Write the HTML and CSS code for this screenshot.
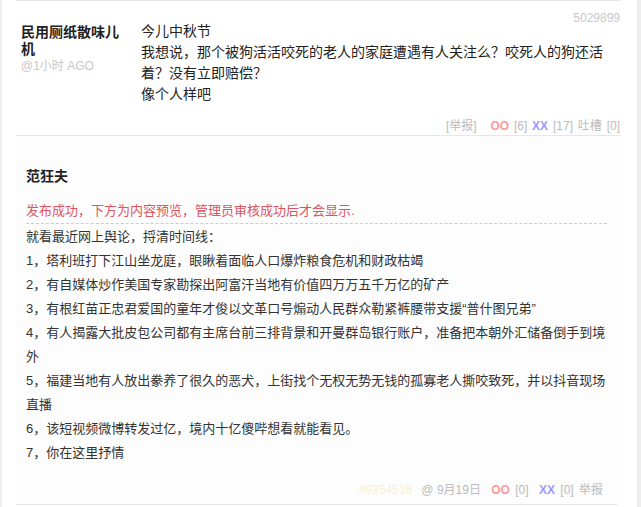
FILE: index.html
```html
<!DOCTYPE html>
<html lang="zh-CN">
<head>
  <meta charset="UTF-8">
  <title>吐槽</title>
  <link rel="stylesheet" href="styles.css">
</head>
<body>
  <div id="comments">

    <div class="comment">
      <div class="comment-head"><span class="comment-id">5029899</span></div>
      <div class="comment-body">
        <div class="author">
          <strong>民用厕纸散味儿机</strong>
          <small>@1小时 AGO</small>
        </div>
        <div class="text">
          今儿中秋节<br>
          我想说，那个被狗活活咬死的老人的家庭遭遇有人关注么？咬死人的狗还活着？没有立即赔偿？<br>
          像个人样吧
        </div>
      </div>
      <div class="vote">
        <span class="report">[举报]</span>
        <b class="oo">OO</b> [6] <b class="xx">XX</b> [17] 吐槽 [0]
      </div>
    </div>

    <div class="preview">
      <div class="preview-name">范狂夫</div>
      <div class="preview-notice">发布成功，下方为内容预览，管理员审核成功后才会显示.</div>
      <div class="preview-text">
        就看最近网上舆论，捋清时间线：<br>
        1，塔利班打下江山坐龙庭，眼瞅着面临人口爆炸粮食危机和财政枯竭<br>
        2，有自媒体炒作美国专家勘探出阿富汗当地有价值四万万五千万亿的矿产<br>
        3，有根红苗正忠君爱国的童年才俊以文革口号煽动人民群众勒紧裤腰带支援“普什图兄弟”<br>
        4，有人揭露大批皮包公司都有主席台前三排背景和开曼群岛银行账户，准备把本朝外汇储备倒手到境外<br>
        5，福建当地有人放出豢养了很久的恶犬，上街找个无权无势无钱的孤寡老人撕咬致死，并以抖音现场直播<br>
        6，该短视频微博转发过亿，境内十亿傻哔想看就能看见。<br>
        7，你在这里抒情
      </div>
      <div class="preview-foot">
        <span class="pid">#9354516</span> @ 9月19日
        <b class="oo">OO</b> <span class="count">[0]</span>
        <b class="xx">XX</b> <span class="count">[0]</span>
        举报
      </div>
    </div>

  </div>
</body>
</html>
```

FILE: styles.css
```css
html, body {
  margin: 0;
  background: #fff;
  color: #333;
  font-family: "Liberation Sans", "Noto Sans CJK SC", sans-serif;
}

#comments {
  height: 507px;
  overflow: hidden;
  border-left: 2px solid #eee;
  border-right: 4px solid #eee;
}

.comment {
  margin: 0 16px 0 14px;
  padding: 0 1px 0 5px;
  border-top: 1px solid #e6e6e6;
  border-bottom: 1px solid #e6e6e6;
}

.comment-head {
  height: 9px;
  padding-top: 11px;
  text-align: right;
  font-size: 12px;
  line-height: 12px;
}

.comment-id {
  color: #c8c8c8;
}

.comment-body {
  display: grid;
  grid-template-columns: 120px 1fr;
}

.author {
  padding-top: 3px;
  width: 104px;
  line-height: 17px;
}

.author strong {
  display: block;
  font-size: 14px;
  color: #222;
}

.author small {
  display: block;
  font-size: 12px;
  color: #c8c8c8;
}

.text {
  font-size: 14px;
  line-height: 21px;
  color: #222;
  padding-right: 12px;
}

.vote {
  margin-top: 12px;
  text-align: right;
  font-size: 12px;
  line-height: 18px;
  color: #bbb;
  word-spacing: 1.5px;
}

.report {
  margin-right: 9px;
}

.oo {
  color: #f99;
}

.xx {
  color: #99f;
}

.preview {
  margin: 0 20px 0 14px;
  padding: 30px 10px 5px;
  background: #fdfdfd;
  border-bottom: 1px solid #e6e6e6;
}

.preview-name {
  font-size: 14px;
  font-weight: bold;
  line-height: 20px;
  color: #222;
}

.preview-notice {
  margin-top: 15px;
  padding-bottom: 2px;
  font-size: 13px;
  line-height: 20px;
  color: #dc5560;
  border-bottom: 1px dashed #ccc;
}

.preview-text {
  margin-top: 1px;
  font-size: 13px;
  line-height: 24px;
  color: #333;
}

.preview-foot {
  margin-top: 16px;
  padding-right: 4px;
  text-align: right;
  font-size: 12px;
  line-height: 18px;
  color: #bbb;
}

.preview-foot .oo {
  margin-left: 7px;
}

.preview-foot .xx {
  margin-left: 5px;
}

.count {
  margin: 0 2px;
}

.pid {
  margin-right: 6px;
  color: #f7f1cc;
}
```
